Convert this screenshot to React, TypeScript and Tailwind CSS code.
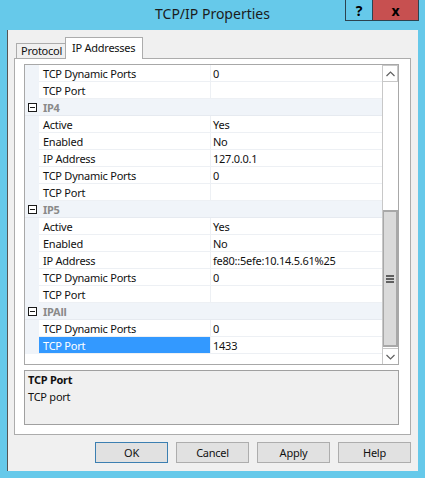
import React from 'react';

type Row =
  | { kind: 'cat'; name: string }
  | { kind: 'prop'; label: string; value?: string; selected?: boolean };

const rows: Row[] = [
  { kind: 'prop', label: 'TCP Dynamic Ports', value: '0' },
  { kind: 'prop', label: 'TCP Port' },
  { kind: 'cat', name: 'IP4' },
  { kind: 'prop', label: 'Active', value: 'Yes' },
  { kind: 'prop', label: 'Enabled', value: 'No' },
  { kind: 'prop', label: 'IP Address', value: '127.0.0.1' },
  { kind: 'prop', label: 'TCP Dynamic Ports', value: '0' },
  { kind: 'prop', label: 'TCP Port' },
  { kind: 'cat', name: 'IP5' },
  { kind: 'prop', label: 'Active', value: 'Yes' },
  { kind: 'prop', label: 'Enabled', value: 'No' },
  { kind: 'prop', label: 'IP Address', value: 'fe80::5efe:10.14.5.61%25' },
  { kind: 'prop', label: 'TCP Dynamic Ports', value: '0' },
  { kind: 'prop', label: 'TCP Port' },
  { kind: 'cat', name: 'IPAll' },
  { kind: 'prop', label: 'TCP Dynamic Ports', value: '0' },
  { kind: 'prop', label: 'TCP Port', value: '1433', selected: true },
];

const MinusBox: React.FC = () => (
  <div className="w-[9px] h-[9px] border border-[#1a1a1a] bg-white flex items-center justify-center">
    <div className="w-[5px] h-px bg-[#1a1a1a]" />
  </div>
);

const Chevron: React.FC<{ up?: boolean }> = ({ up }) => (
  <svg width="9" height="6" viewBox="0 0 9 6">
    <path d={up ? 'M0.5 5 L4.5 1 L8.5 5' : 'M0.5 1 L4.5 5 L8.5 1'} fill="none" stroke="#606060" strokeWidth="1.2" />
  </svg>
);

const GridRow: React.FC<{ row: Row }> = ({ row }) => {
  if (row.kind === 'cat') {
    return (
      <div className="flex h-[17px] bg-[#F0F4F9] border-b border-[#E6EAF0]">
        <div className="w-[14px] flex items-center justify-center">
          <MinusBox />
        </div>
        <div className="pl-[4px] font-bold text-[#8A8A8A] leading-[18px]">{row.name}</div>
      </div>
    );
  }
  return (
    <div className="flex h-[17px]">
      <div className="w-[14px] bg-[#F0F4F9]" />
      <div
        className={`w-[172px] border-r border-b border-[#EDF0F4] pl-[4px] leading-[18px] ${
          row.selected ? 'bg-[#3399FF] text-white' : 'bg-white'
        }`}
      >
        {row.label}
      </div>
      <div className="flex-1 border-b border-[#EDF0F4] pl-[2px] leading-[18px] bg-white whitespace-nowrap">
        {row.value ?? ''}
      </div>
    </div>
  );
};

const Scrollbar: React.FC = () => (
  <div className="w-[16px] flex flex-col border-l border-[#C8C8C8] bg-white">
    <div className="h-[17px] border border-[#C8C8C8] border-l-0 flex items-center justify-center bg-white">
      <Chevron up />
    </div>
    <div className="flex-1">
      <div className="mt-[128px] h-[137px] bg-[#DADADA] border-2 border-l border-[#A8A8A8] flex flex-col items-center justify-center gap-[1px]">
        <div className="w-[8px] h-[2px] bg-[#606060]" />
        <div className="w-[8px] h-[2px] bg-[#606060]" />
        <div className="w-[8px] h-[2px] bg-[#606060]" />
      </div>
    </div>
    <div className="h-[16px] border-t border-[#C8C8C8] flex items-center justify-center bg-white">
      <Chevron />
    </div>
  </div>
);

const DialogButton: React.FC<{ label: string; primary?: boolean }> = ({ label, primary }) => (
  <button
    className={`w-[73px] h-[21px] bg-[#E1E1E1] border text-[#111] leading-[19px] ${
      primary ? 'border-[#3C7FB1]' : 'border-[#ADADAD]'
    }`}
  >
    {label}
  </button>
);

const App: React.FC = () => {
  return (
    <div
      className="w-[425px] h-[478px] bg-[#66C9EA] overflow-hidden text-[11px] tracking-[-0.25px] text-[#111]"
      style={{ fontFamily: '"Noto Sans", sans-serif' }}
    >
      {/* caption bar */}
      <div className="relative h-[30px]">
        <div className="text-center text-[14px] tracking-normal leading-[28px] text-[#1b1b1b]">TCP/IP Properties</div>
        <div className="absolute top-0 right-[6px] flex">
          <div className="w-[28px] h-[21px] border border-t-0 border-[#2C4350] flex items-center justify-center font-bold text-[14px] text-black">?</div>
          <div className="w-[46px] h-[21px] bg-[#C75050] border border-t-0 border-l-0 border-[#2C4350] flex items-center justify-center font-bold text-[14px] text-black">x</div>
        </div>
      </div>

      {/* client area */}
      <div className="ml-[7px] w-[411px] h-[441px] bg-[#F0F0F0] border-l border-[#555] flex flex-col pl-[6px] pr-[7px] pt-[7px] pb-[8px]">
        <div className="h-[21px] flex items-end pl-[2px]">
          <div className="w-[49px] h-[15px] border-l border-t border-[#ACACAC] bg-[#F0F0F0] pl-[4px] leading-[14px]">Protocol</div>
          <div className="relative z-10 -mb-px w-[78px] h-[22px] border border-b-0 border-[#ACACAC] bg-white pl-[6px] leading-[19px]">IP Addresses</div>
        </div>

        <div className="h-[377px] border border-[#ACACAC] bg-white pt-[5px] pl-[9px] pr-[11px] pb-[9px] flex flex-col gap-[5px]">
          <div className="h-[301px] border border-[#A8A8A8] flex">
            <div className="flex-1 flex flex-col">
              {rows.map((r, i) => (
                <GridRow key={i} row={r} />
              ))}
            </div>
            <Scrollbar />
          </div>

          <div className="h-[55px] border border-[#A0A0A0] bg-[#F0F0F0] pl-[3px] leading-[17px]">
            <div className="font-bold">TCP Port</div>
            <div>TCP port</div>
          </div>
        </div>

        <div className="mt-[7px] flex justify-end gap-[8px]">
          <DialogButton label="OK" primary />
          <DialogButton label="Cancel" />
          <DialogButton label="Apply" />
          <DialogButton label="Help" />
        </div>
      </div>
    </div>
  );
};

export default App;
